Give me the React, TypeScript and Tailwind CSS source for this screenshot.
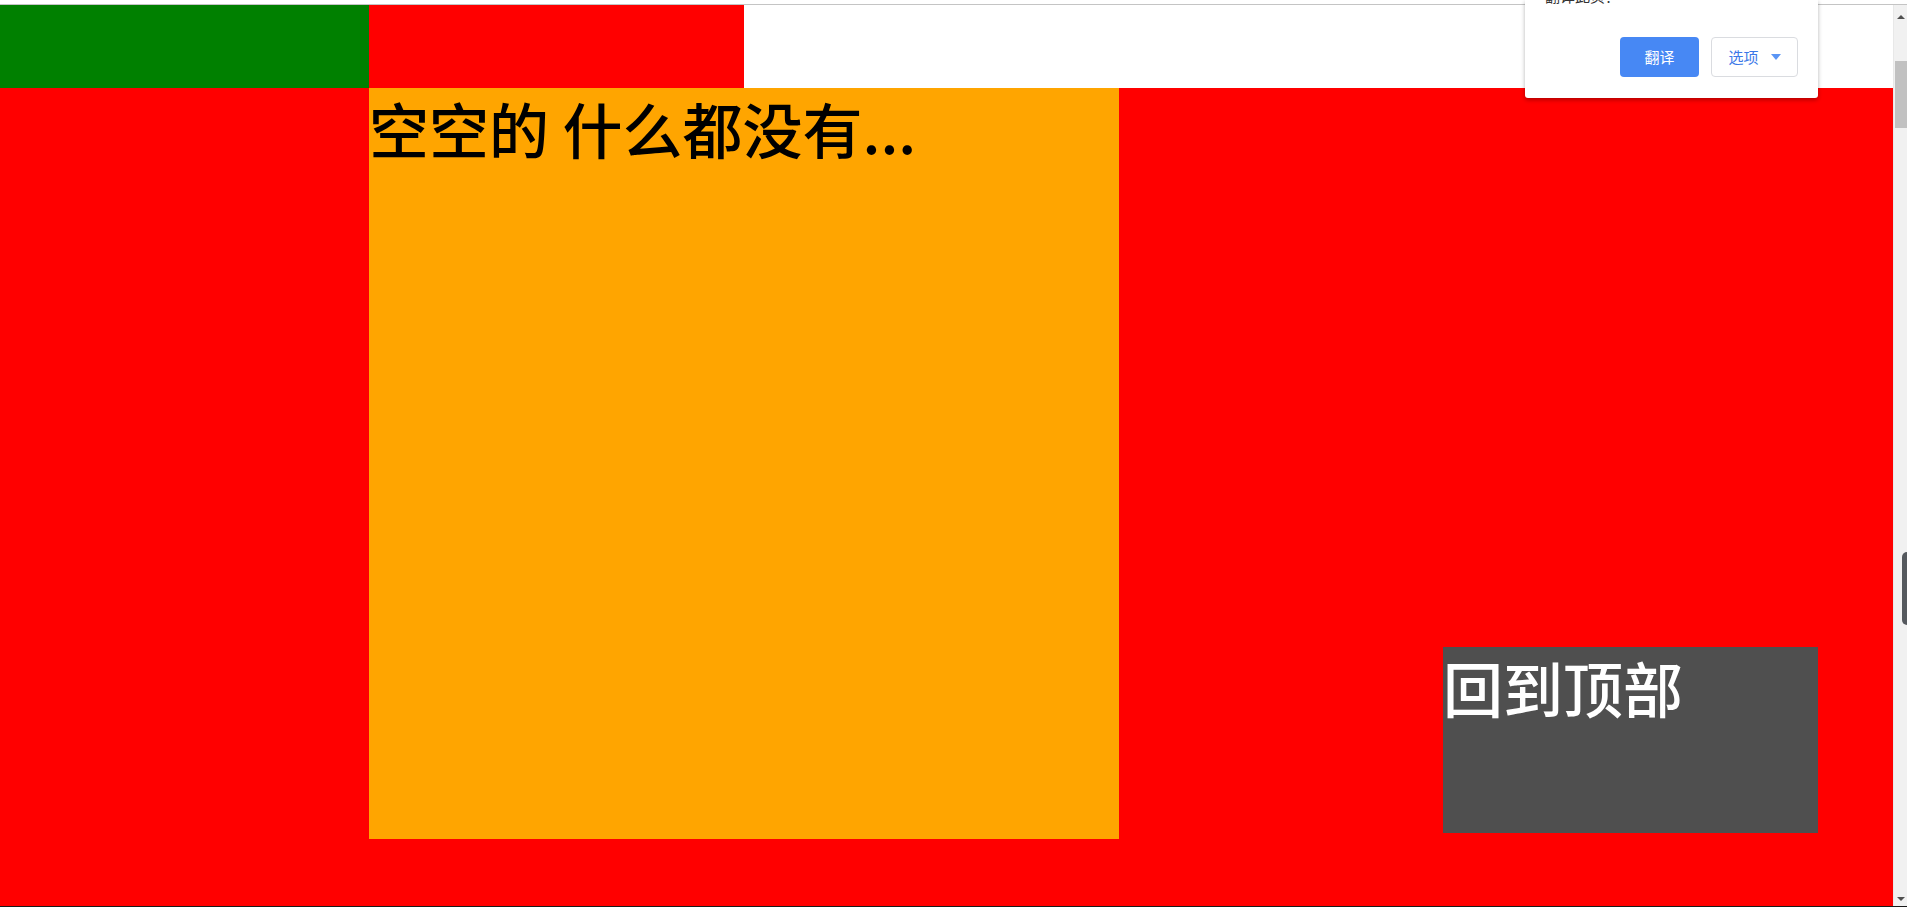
import React from "react";

const cjk = { fontFamily: '"Noto Sans CJK SC", "Noto Sans", sans-serif' };

export default function App() {
  return (
    <div className="relative w-[1907px] h-[907px] overflow-hidden bg-white flex flex-col" style={cjk}>
      <div className="h-[4px] bg-white shrink-0" />
      <div className="h-px bg-[#c4c4c4] shrink-0" />
      <div className="flex flex-1 min-h-0">
        <main className="relative flex-1 flex flex-col bg-[#ff0000]">
          <header className="h-[83px] flex bg-white shrink-0">
            <div className="w-[369px] bg-[#008000]" />
            <div className="w-[375px] bg-[#ff0000]" />
          </header>
          <div className="flex-1 flex">
            <div className="ml-[369px] w-[750px] h-[751px] bg-[#ffa500] text-black text-[60px] font-medium leading-[80px] whitespace-nowrap">
              空空的 什么都没有...
            </div>
          </div>
          <div className="absolute right-[75px] bottom-[73px] w-[375px] h-[186px] bg-[#4f4f4f] text-white text-[60px] font-medium leading-[80px] whitespace-nowrap">
            回到顶部
          </div>
        </main>
        <div className="relative w-[14px] bg-[#f1f1f1] border-l border-[#e8e8e8]">
          <div className="absolute left-[3px] top-[10px] w-0 h-0 border-l-[4px] border-r-[4px] border-b-[4px] border-l-transparent border-r-transparent border-b-[#505050]" />
          <div className="absolute left-[1px] right-0 top-[56px] h-[67px] bg-[#c1c1c1]" />
          <div className="absolute right-0 top-[547px] w-[5px] h-[73px] rounded-l-md bg-[#55595e]" />
          <div className="absolute left-[3px] bottom-[5px] w-0 h-0 border-l-[4px] border-r-[4px] border-t-[4px] border-l-transparent border-r-transparent border-t-[#505050]" />
        </div>
      </div>
      <div className="h-px bg-[#1a1a1a] shrink-0" />

      <div className="absolute left-[1525px] top-0 w-[293px] h-[98px] bg-white rounded-b-[3px] shadow-[0_2px_4px_rgba(0,0,0,0.3)]">
        <div className="absolute left-[20px] top-[-13px] text-[15px] leading-[18px] text-[#333]">翻译此页？</div>
        <div className="flex justify-end gap-3 pr-5 pt-[37px]">
          <button className="w-[79px] h-[40px] rounded-[4px] bg-[#4788f4] text-white text-[15px] flex items-center justify-center">
            翻译
          </button>
          <button className="w-[87px] h-[40px] rounded-[4px] bg-white border border-[#dadce0] text-[#3b78e7] text-[15px] flex items-center justify-center gap-[12px]">
            <span>选项</span>
            <span className="w-0 h-0 border-l-[5px] border-r-[5px] border-t-[6px] border-l-transparent border-r-transparent border-t-[#5a95f5]" />
          </button>
        </div>
      </div>
    </div>
  );
}
